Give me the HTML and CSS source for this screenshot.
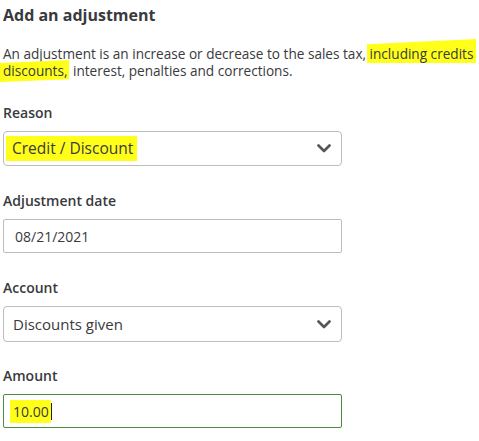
FILE: index.html
```html
<!DOCTYPE html>
<html lang="en">
<head>
<meta charset="utf-8">
<title>Add an adjustment</title>
<link rel="stylesheet" href="styles.css">
</head>
<body>
<div class="panel">
  <h2 class="title">Add an adjustment</h2>
  <p class="desc">An adjustment is an increase or decrease to the sales tax, <span class="hl hl-a">including credits</span><br><span class="hl hl-b">discounts,</span> interest, penalties and corrections.</p>

  <div class="field">
    <label class="label">Reason</label>
    <div class="box select">
      <span class="value big"><span class="hl hl-c">Credit / Discount</span></span>
      <svg class="chev" width="14" height="9" viewBox="0 0 14 9"><path d="M1.5 1.5 L7 7 L12.5 1.5" fill="none" stroke="#555" stroke-width="2.6" stroke-linecap="round" stroke-linejoin="round"/></svg>
    </div>
  </div>

  <div class="field">
    <label class="label">Adjustment date</label>
    <div class="box input">
      <span class="value date">08/21/2021</span>
    </div>
  </div>

  <div class="field">
    <label class="label">Account</label>
    <div class="box select tall">
      <span class="value">Discounts given</span>
      <svg class="chev" width="14" height="9" viewBox="0 0 14 9"><path d="M1.5 1.5 L7 7 L12.5 1.5" fill="none" stroke="#555" stroke-width="2.6" stroke-linecap="round" stroke-linejoin="round"/></svg>
    </div>
  </div>

  <div class="field last">
    <label class="label">Amount</label>
    <div class="box input focus">
      <span class="value"><span class="hl hl-d">10.00</span><span class="caret"></span></span>
    </div>
  </div>
</div>
</body>
</html>
```

FILE: styles.css
```css
html, body {
  margin: 0;
  padding: 0;
  background: #fff;
}
body {
  font-family: "Open Sans", "Liberation Sans", sans-serif;
  color: #393a3d;
}
.panel {
  padding: 4px 0 0 3px;
  width: 476px;
}
.title {
  margin: 0;
  font-size: 16px;
  font-weight: 700;
  line-height: 22px;
  color: #393a3d;
}
.desc {
  margin: 19px 0 0 0;
  font-size: 13.6px;
  line-height: 17px;
  color: #393a3d;
  white-space: nowrap;
}
.hl {
  background: #ffff1a;
}
.hl-a {
  padding: 5px 3px 0 3px;
  margin-left: -3px;
  clip-path: polygon(0 22%, 100% 0, 100% 100%, 0 100%);
}
.hl-b {
  padding: 1px 2px 2px 3px;
  margin-left: -3px;
  clip-path: polygon(0 14%, 100% 0, 100% 88%, 0 100%);
}
.field {
  margin-top: 25px;
  width: 339px;
}
.desc + .field {
  margin-top: 24px;
}
.field.last {
  margin-top: 24px;
}
.label {
  display: block;
  font-size: 14px;
  font-weight: 600;
  line-height: 19px;
  margin-bottom: 9px;
}
.box {
  height: 35px;
  box-sizing: border-box;
  border: 1px solid #bcbcbc;
  display: flex;
  align-items: center;
  justify-content: space-between;
  padding: 0 10px 0 9px;
}
.select {
  border-radius: 4px;
}
.tall {
  height: 36px;
}
.input {
  border-radius: 2px;
  height: 34px;
}
.focus {
  border-color: #4d8a3f;
}
.value {
  font-size: 15px;
  color: #393a3d;
  display: flex;
  align-items: center;
}
.big {
  font-size: 15.5px;
}
.date {
  font-size: 14px;
  padding-left: 2px;
}
.hl-c {
  padding: 1px 4px 2px 6px;
  margin-left: -7px;
}
.hl-d {
  padding: 2px 2px 2px 3px;
  margin-left: -3px;
  font-size: 14px;
}
.caret {
  display: inline-block;
  width: 1px;
  height: 17px;
  background: #222;
}
.chev {
  display: block;
}
```
